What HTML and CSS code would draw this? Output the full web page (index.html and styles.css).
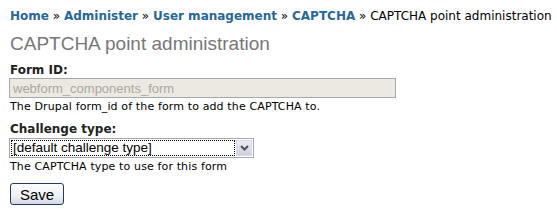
FILE: index.html
```html
<!DOCTYPE html>
<html lang="en">
<head>
    <meta charset="UTF-8">
    <title>CAPTCHA point administration</title>
    <link rel="stylesheet" href="styles.css">
</head>
<body>
    <div class="page">
        <div class="breadcrumb">
            <a href="#">Home</a> &raquo; <a href="#">Administer</a> &raquo; <a href="#">User management</a> &raquo; <a href="#">CAPTCHA</a> &raquo; CAPTCHA point administration
        </div>
        <h2 class="title">CAPTCHA point administration</h2>

        <form>
            <div class="form-item">
                <label for="form-id">Form ID:</label>
                <input type="text" id="form-id" class="form-text" value="webform_components_form" disabled>
                <div class="description">The Drupal form_id of the form to add the CAPTCHA to.</div>
            </div>

            <div class="form-item">
                <label for="challenge">Challenge type:</label>
                <div class="select-wrap">
                    <select id="challenge" class="form-select">
                        <option>[default challenge type]</option>
                    </select>
                    <span class="select-btn">
                        <svg width="9" height="6" viewBox="0 0 9 6"><path d="M1 1 L4.5 4.5 L8 1" fill="none" stroke="#4d4d5a" stroke-width="2"/></svg>
                    </span>
                </div>
                <div class="description">The CAPTCHA type to use for this form</div>
            </div>

            <button type="button" class="form-submit">Save</button>
        </form>
    </div>
</body>
</html>
```

FILE: styles.css
```css
body {
    margin: 0;
    background: #fff;
    color: #000;
    font-family: "DejaVu Sans", Verdana, sans-serif;
}

.page {
    padding: 9px 9px 0 9px;
}

.breadcrumb {
    font-size: 12px;
    line-height: 15px;
    padding-left: 1px;
    white-space: nowrap;
}

.breadcrumb a {
    color: #27679a;
    font-weight: bold;
    text-decoration: none;
}

.title {
    margin: 9px 0 0 1px;
    font-family: "Liberation Sans", Arial, sans-serif;
    font-size: 19px;
    font-weight: normal;
    line-height: 22px;
    color: #777;
}

.form-item {
    margin-top: 8px;
}

label {
    display: block;
    font-size: 12px;
    font-weight: bold;
    line-height: 14px;
    color: #222;
    padding-left: 1px;
}

.form-text {
    display: block;
    box-sizing: border-box;
    width: 387px;
    height: 20px;
    margin: 1px 0 0 0;
    padding: 0 3px;
    border: 1px solid #a5aaa9;
    background: #ebe9e2;
    color: #aaa8a0;
    font-family: "Liberation Sans", Arial, sans-serif;
    font-size: 13px;
}

.description {
    font-size: 11px;
    letter-spacing: 0.13px;
    line-height: 14px;
    padding-left: 1px;
    margin-top: 2px;
}

.select-wrap {
    display: flex;
    box-sizing: border-box;
    width: 245px;
    height: 20px;
    margin-top: 2px;
    border: 1px solid #a5a9ac;
    padding: 1px;
}

.form-select {
    flex: 1;
    -webkit-appearance: none;
    appearance: none;
    margin: 0;
    padding: 0 1px;
    border: 1px dotted #000;
    border-radius: 0;
    background: #fff;
    color: #000;
    font-family: "Liberation Sans", Arial, sans-serif;
    font-size: 13.5px;
    line-height: 14px;
    outline: none;
}

.select-btn {
    display: flex;
    align-items: center;
    justify-content: center;
    width: 16px;
    margin-left: 1px;
    background: linear-gradient(#eceef6, #cdd0de);
    border: 1px solid #d8dbe6;
    box-sizing: border-box;
}

.form-submit {
    display: block;
    margin: 9px 0 0 1px;
    width: 54px;
    height: 22px;
    padding: 0;
    border: 1px solid #1f3c68;
    border-radius: 3px;
    background: linear-gradient(#fefefe, #eef0f6 60%, #d4d8e6);
    font-family: "Liberation Sans", Arial, sans-serif;
    font-size: 15px;
    color: #000;
}
```
